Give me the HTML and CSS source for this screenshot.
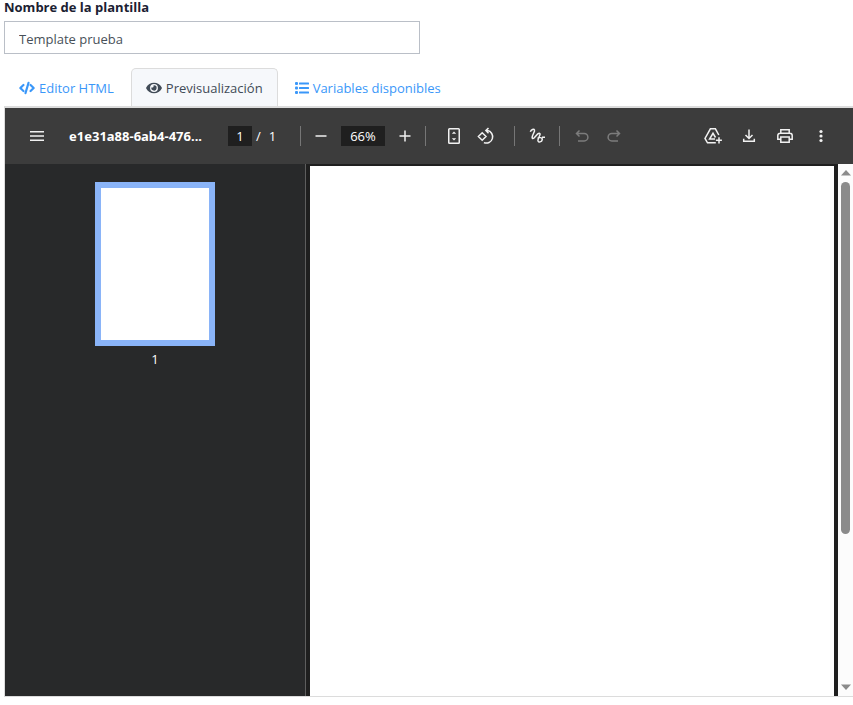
FILE: index.html
```html
<!DOCTYPE html>
<html lang="es">
<head>
<meta charset="utf-8">
<meta name="viewport" content="width=device-width, initial-scale=1">
<title>Plantilla</title>
<link rel="stylesheet" href="styles.css">
</head>
<body>
<form class="field">
  <label class="field-label" for="name">Nombre de la plantilla</label>
  <input class="field-input" id="name" type="text" value="Template prueba">
</form>
<nav class="tabs">
  <a class="tab" href="#editor">
    <svg class="tab-icon" viewBox="0 0 18 14" fill="none" stroke="currentColor" stroke-width="2.400" stroke-linecap="round" stroke-linejoin="round"><path d="M5 3.500L1.500 7 5 10.500M13 3.500L16.500 7 13 10.500M10.700 1.200L7.300 12.800"/></svg>
    <span>Editor HTML</span>
  </a>
  <a class="tab tab-active" href="#preview">
    <svg class="tab-icon" viewBox="0 0 576 512" fill="currentColor"><path d="M572.520 241.400C518.290 135.590 410.930 64 288 64S57.680 135.640 3.480 241.410a32.350 32.350 0 0 0 0 29.190C57.710 376.410 165.070 448 288 448s230.320-71.640 284.520-177.410a32.350 32.350 0 0 0 0-29.190zM288 400a144 144 0 1 1 144-144 143.930 143.930 0 0 1-144 144zm0-240a95.310 95.310 0 0 0-25.310 3.790 47.850 47.850 0 0 1-66.900 66.900A95.780 95.780 0 1 0 288 160z"/></svg>
    <span>Previsualización</span>
  </a>
  <a class="tab" href="#variables">
    <svg class="tab-icon tab-icon-list" viewBox="0 0 14 12" fill="currentColor"><rect width="3" height="3" rx="1"/><rect y="4.500" width="3" height="3" rx="1"/><rect y="9" width="3" height="3" rx="1"/><rect x="4" y=".5" width="10" height="2" rx=".5"/><rect x="4" y="5" width="10" height="2" rx=".5"/><rect x="4" y="9.500" width="10" height="2" rx=".5"/></svg>
    <span>Variables disponibles</span>
  </a>
</nav>
<main class="viewer">
  <header class="toolbar">
    <div class="group group-title">
      <button class="tool" type="button" aria-label="Menú"><svg class="icon" viewBox="0 0 18 18"><path d="M2 4.750h14M2 9h14M2 13.250h14"/></svg></button>
      <span class="doc-title">e1e31a88-6ab4-476...</span>
    </div>
    <div class="group">
      <input class="box box-page" type="text" value="1" aria-label="Página">
      <span class="count"><span>/</span><span>1</span></span>
    </div>
    <span class="rule"></span>
    <div class="group group-zoom">
      <button class="tool" type="button" aria-label="Alejar"><svg class="icon" viewBox="0 0 18 18"><path d="M3.500 9h11"/></svg></button>
      <input class="box box-zoom" type="text" value="66%" aria-label="Zoom">
      <button class="tool" type="button" aria-label="Acercar"><svg class="icon" viewBox="0 0 18 18"><path d="M3.500 9h11M9 3.500v11"/></svg></button>
    </div>
    <span class="rule"></span>
    <div class="group group-fit">
      <button class="tool" type="button" aria-label="Ajustar a la página"><svg class="icon" viewBox="0 0 18 18"><rect x="3.750" y="1.750" width="10.500" height="14.500" rx=".8"/><path class="solid" d="M9 4.500l2.200 2.200H6.800zM9 13.500l2.200-2.200H6.800z"/></svg></button>
      <button class="tool" type="button" aria-label="Girar"><svg class="icon" viewBox="0 0 18 18"><path d="M5.200 5.700L9 9.500l-3.800 3.800L1.400 9.500zM8.500 3.600h2a6.300 6.300 0 1 1-3.600 12M11.500 1L8.900 3.600l2.600 2.600"/></svg></button>
    </div>
    <span class="rule"></span>
    <div class="group group-draw">
      <button class="tool" type="button" aria-label="Dibujar"><svg class="icon" viewBox="0 0 18 18"><path d="M2.300 4.800C3.300 2.600 5.800 1.600 6.500 3 7.300 4.900 3 9.200 4.300 11.200c1.500 2 4.300-4.700 6.800-4.900 2.900 0-1.700 5.300-1.200 7.400.5 2.300 3.900 1.100 4.300-.9.500-2.400-3-3-4.600-1.300M14 10.200h3"/></svg></button>
    </div>
    <span class="rule"></span>
    <div class="group group-draw">
      <button class="tool" type="button" aria-label="Deshacer" disabled><svg class="icon" viewBox="0 0 18 18"><path d="M6.500 3.500L3.500 6.500l3 3M3.500 6.500h7.700a3.700 3.700 0 0 1 0 7.400H5"/></svg></button>
      <button class="tool" type="button" aria-label="Rehacer" disabled><svg class="icon" viewBox="0 0 18 18"><path d="M11.500 3.500l3 3-3 3M14.500 6.500H6.800a3.700 3.700 0 0 0 0 7.400H13"/></svg></button>
    </div>
    <div class="group group-end">
      <button class="tool" type="button" aria-label="Guardar en Drive"><svg class="icon" viewBox="0 0 18 18"><path d="M11.800 15.800H3.500L1 11.500 6.400 1.800h5l3.400 6.200M11 12H5.600L9 6.300l2.500 4.200M15 10.200v6.300M11.900 13.300h6"/></svg></button>
      <button class="tool" type="button" aria-label="Descargar"><svg class="icon" viewBox="0 0 18 18"><path d="M9 2.500v8.700M5.500 8L9 11.500 12.500 8M3.700 11.800v2.500h10.600v-2.500"/></svg></button>
      <button class="tool" type="button" aria-label="Imprimir"><svg class="icon" viewBox="0 0 18 18"><path d="M4.800 6V2.700h8.400V6M4.500 12.200H1.800V8.500a2.300 2.300 0 0 1 2.300-2.300h9.800a2.300 2.300 0 0 1 2.300 2.300v3.700h-2.700M4.800 10h8.400v5.300H4.800z"/></svg></button>
      <button class="tool" type="button" aria-label="Más"><svg class="icon" viewBox="0 0 18 18"><g class="solid"><circle cx="9" cy="4.500" r="1.600"/><circle cx="9" cy="9" r="1.600"/><circle cx="9" cy="13.500" r="1.600"/></g></svg></button>
    </div>
  </header>
  <div class="content">
    <aside class="sidebar">
      <button class="thumb" type="button" aria-label="Página 1"></button>
      <span class="thumb-number">1</span>
    </aside>
    <section class="canvas"><div class="page"></div></section>
    <div class="scrollbar">
      <svg class="arrow" viewBox="0 0 10 6"><path d="M5 0l5 5.500H0z"/></svg>
      <div class="track"><div class="handle"></div></div>
      <svg class="arrow" viewBox="0 0 10 6"><path d="M0 .5h10L5 6z"/></svg>
    </div>
  </div>
</main>
</body>
</html>
```
FILE: styles.css
```css
* { box-sizing: border-box; }

body {
  margin: 0;
  padding: 0 0 8px 4px;
  min-height: 100vh;
  display: flex;
  flex-direction: column;
  background: #fff;
  font-family: "Open Sans", "Noto Sans", sans-serif;
  font-size: 13px;
  line-height: 20px;
  color: #475058;
}

button, input { font: inherit; border: 0; border-radius: 0; margin: 0; }

.field { display: flex; flex-direction: column; padding-bottom: 14px; }
.field-label { padding-bottom: 6px; line-height: 15px; font-weight: 700; color: #1b2132; }
.field-input {
  width: 49%;
  height: 33px;
  padding: 3px 14px 0;
  border: 1px solid #babfc7;
  background: #fff;
  color: #475058;
}

.tabs { display: flex; gap: 2px; }
.tab {
  display: flex;
  align-items: center;
  gap: 4px;
  height: 38px;
  padding: 0 14px;
  border: 1px solid transparent;
  border-bottom: 0;
  border-radius: 5px 5px 0 0;
  color: #3a97f9;
  text-decoration: none;
  white-space: nowrap;
}
.tab-active { background: #f6f8fb; border-color: #dcdcdc; color: #414b57; }
.tab-icon { width: 16px; height: 14px; }
.tab-icon-list { width: 14px; height: 12px; }

.viewer {
  flex: 1;
  display: flex;
  flex-direction: column;
  border: 1px solid #dcdcdc;
  border-width: 2px 0 1px 1px;
}

.toolbar { display: flex; align-items: center; height: 56px; background: #3c3c3c; color: #fff; }
.group { display: flex; align-items: center; }
.group-title { width: 223px; padding-left: 16px; gap: 16px; }
.doc-title { font-family: "Noto Sans", sans-serif; font-weight: 700; white-space: nowrap; }
.group-zoom { gap: 4px; padding: 0 4px; }
.group-fit { padding: 0 12px; }
.group-draw { padding: 0 6px; }
.group-end { margin-left: auto; padding-right: 16px; gap: 4px; }
.box { height: 20px; padding: 0; background: #1f1f1f; color: #fff; text-align: center; }
.box-page { width: 24px; }
.box-zoom { width: 44px; }
.count { display: flex; gap: 8px; width: 48px; padding-left: 4px; }
.rule { width: 1px; height: 20px; background: #767676; }

.tool {
  display: flex;
  align-items: center;
  justify-content: center;
  width: 32px;
  height: 32px;
  padding: 0;
  background: none;
  color: #f1f1f1;
}
.tool:disabled { color: #7c7c7c; }
.icon { width: 18px; height: 18px; fill: none; stroke: currentColor; stroke-width: 1.5; }
.solid { fill: currentColor; stroke: none; }

.content { flex: 1; display: flex; background: #1f1f1f; }
.sidebar {
  width: 301px;
  display: flex;
  flex-direction: column;
  align-items: center;
  padding-top: 18px;
  border-right: 1px solid #5e5e5e;
  background: #28292a;
  color: #fff;
}
.thumb { width: 120px; height: 164px; border: 6px solid #8ab4f8; background: #fff; }
.thumb-number { padding-top: 3px; }
.canvas { flex: 1; display: flex; padding: 2px 4px 0; }
.page { flex: 1; background: #fff; }

.scrollbar {
  width: 15px;
  display: flex;
  flex-direction: column;
  align-items: center;
  padding: 6px 0;
  background: #fcfcfc;
}
.arrow { width: 10px; height: 6px; fill: #8b8b8b; }
.track { flex: 1; width: 9px; padding: 6px 0; }
.handle { height: 71%; border-radius: 5px; background: #8b8b8b; }
```
